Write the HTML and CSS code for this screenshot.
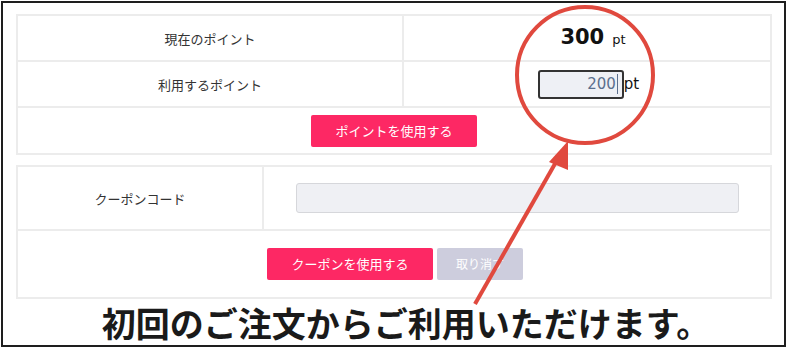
FILE: index.html
```html
<!DOCTYPE html>
<html lang="ja">
<head>
    <meta charset="utf-8">
    <title>ポイント・クーポン</title>
    <link rel="stylesheet" href="styles.css">
</head>
<body>
    <div class="frame">
        <table class="panel points">
            <tr>
                <th>現在のポイント</th>
                <td><span class="current">300</span><span class="unit">pt</span></td>
            </tr>
            <tr>
                <th>利用するポイント</th>
                <td><span class="use-input">200<span class="caret"></span></span><span class="unit-in">pt</span></td>
            </tr>
            <tr>
                <td colspan="2" class="actions"><a class="btn">ポイントを使用する</a></td>
            </tr>
        </table>

        <table class="panel coupon">
            <tr>
                <th>クーポンコード</th>
                <td><div class="code-input"></div></td>
            </tr>
            <tr>
                <td colspan="2" class="actions">
                    <div class="btn-row">
                        <a class="btn">クーポンを使用する</a>
                        <a class="btn btn-cancel">取り消す</a>
                    </div>
                </td>
            </tr>
        </table>

        <p class="caption">初回のご注文からご利用いただけます。</p>

        <!-- annotation: circle + arrow -->
        <svg class="note" width="787" height="348" viewBox="0 0 787 348">
            <circle cx="585" cy="75" r="68" fill="none" stroke="#e0493e" stroke-width="4"/>
            <line x1="475" y1="304" x2="560" y2="155" stroke="#e0493e" stroke-width="4"/>
            <polygon points="568,141 549,162 568,170" fill="#e0493e"/>
        </svg>
    </div>
</body>
</html>
```

FILE: styles.css
```css
body {
    margin: 0;
    font-family: "Noto Sans CJK JP", "Noto Sans", sans-serif;
    color: #333;
    background: #fff;
}
.frame {
    position: relative;
    box-sizing: border-box;
    width: 785px;
    height: 346px;
    margin: 1px 0 0 1px;
    border: 2px solid #1e1e1e;
    padding: 11px 0 0 13px;
}
.panel {
    width: 756px;
    border-collapse: collapse;
    border: 2px solid #d3d3d3;
    background: #fff;
}
.panel th,
.panel td {
    border: 2px solid #ececec;
    text-align: center;
    padding: 0;
}
.panel th {
    font-weight: normal;
    font-size: 13px;
}
.points th {
    width: 384px;
}
.points tr:nth-child(1) { height: 46px; }
.points tr:nth-child(2) { height: 46px; }
.points tr:nth-child(3) { height: 47px; }
.current {
    font-family: "DejaVu Sans", sans-serif;
    font-size: 21px;
    font-weight: bold;
    color: #111;
    display: inline-block;
    margin-left: 12px;
    padding-bottom: 2px;
}
.unit {
    font-family: "DejaVu Sans", sans-serif;
    font-size: 13px;
    color: #111;
    margin-left: 8px;
}
.use-input {
    display: inline-block;
    box-sizing: border-box;
    width: 86px;
    height: 29px;
    border: 2px solid #333;
    border-radius: 3px;
    background: #eef0f5;
    text-align: right;
    padding-right: 4px;
    font-family: "DejaVu Sans", sans-serif;
    font-size: 15px;
    line-height: 25px;
    color: #5b6f8e;
    vertical-align: middle;
    margin-left: 3px;
}
.caret {
    display: inline-block;
    width: 1px;
    height: 20px;
    background: #5b6f8e;
    vertical-align: middle;
    margin-left: 1px;
}
.unit-in {
    font-family: "DejaVu Sans", sans-serif;
    font-size: 15px;
    color: #111;
    vertical-align: middle;
}
.btn {
    display: inline-block;
    box-sizing: border-box;
    width: 166px;
    height: 32px;
    line-height: 32px;
    border-radius: 2px;
    background: #fd2864;
    color: #fff;
    font-size: 13px;
    text-align: center;
    vertical-align: middle;
}
.coupon {
    margin-top: 10px;
}
.coupon th {
    width: 244px;
}
.coupon tr:nth-child(1) { height: 64px; }
.coupon tr:nth-child(2) { height: 68px; }
.code-input {
    box-sizing: border-box;
    width: 443px;
    height: 30px;
    margin-left: 32px;
    border: 1px solid #d6d7db;
    border-radius: 3px;
    background: #eff0f4;
}
.btn-row {
    display: flex;
    justify-content: center;
    gap: 4px;
    padding-left: 2px;
}
.btn-cancel {
    width: 86px;
    background: #cdcddd;
    font-size: 12px;
}
.caption {
    margin: 4px 0 0 0;
    padding-left: 12px;
    text-align: center;
    font-size: 34px;
    font-weight: bold;
    line-height: 40px;
    color: #1a1a1a;
}
.note {
    position: absolute;
    left: -3px;
    top: -3px;
    pointer-events: none;
}
```
